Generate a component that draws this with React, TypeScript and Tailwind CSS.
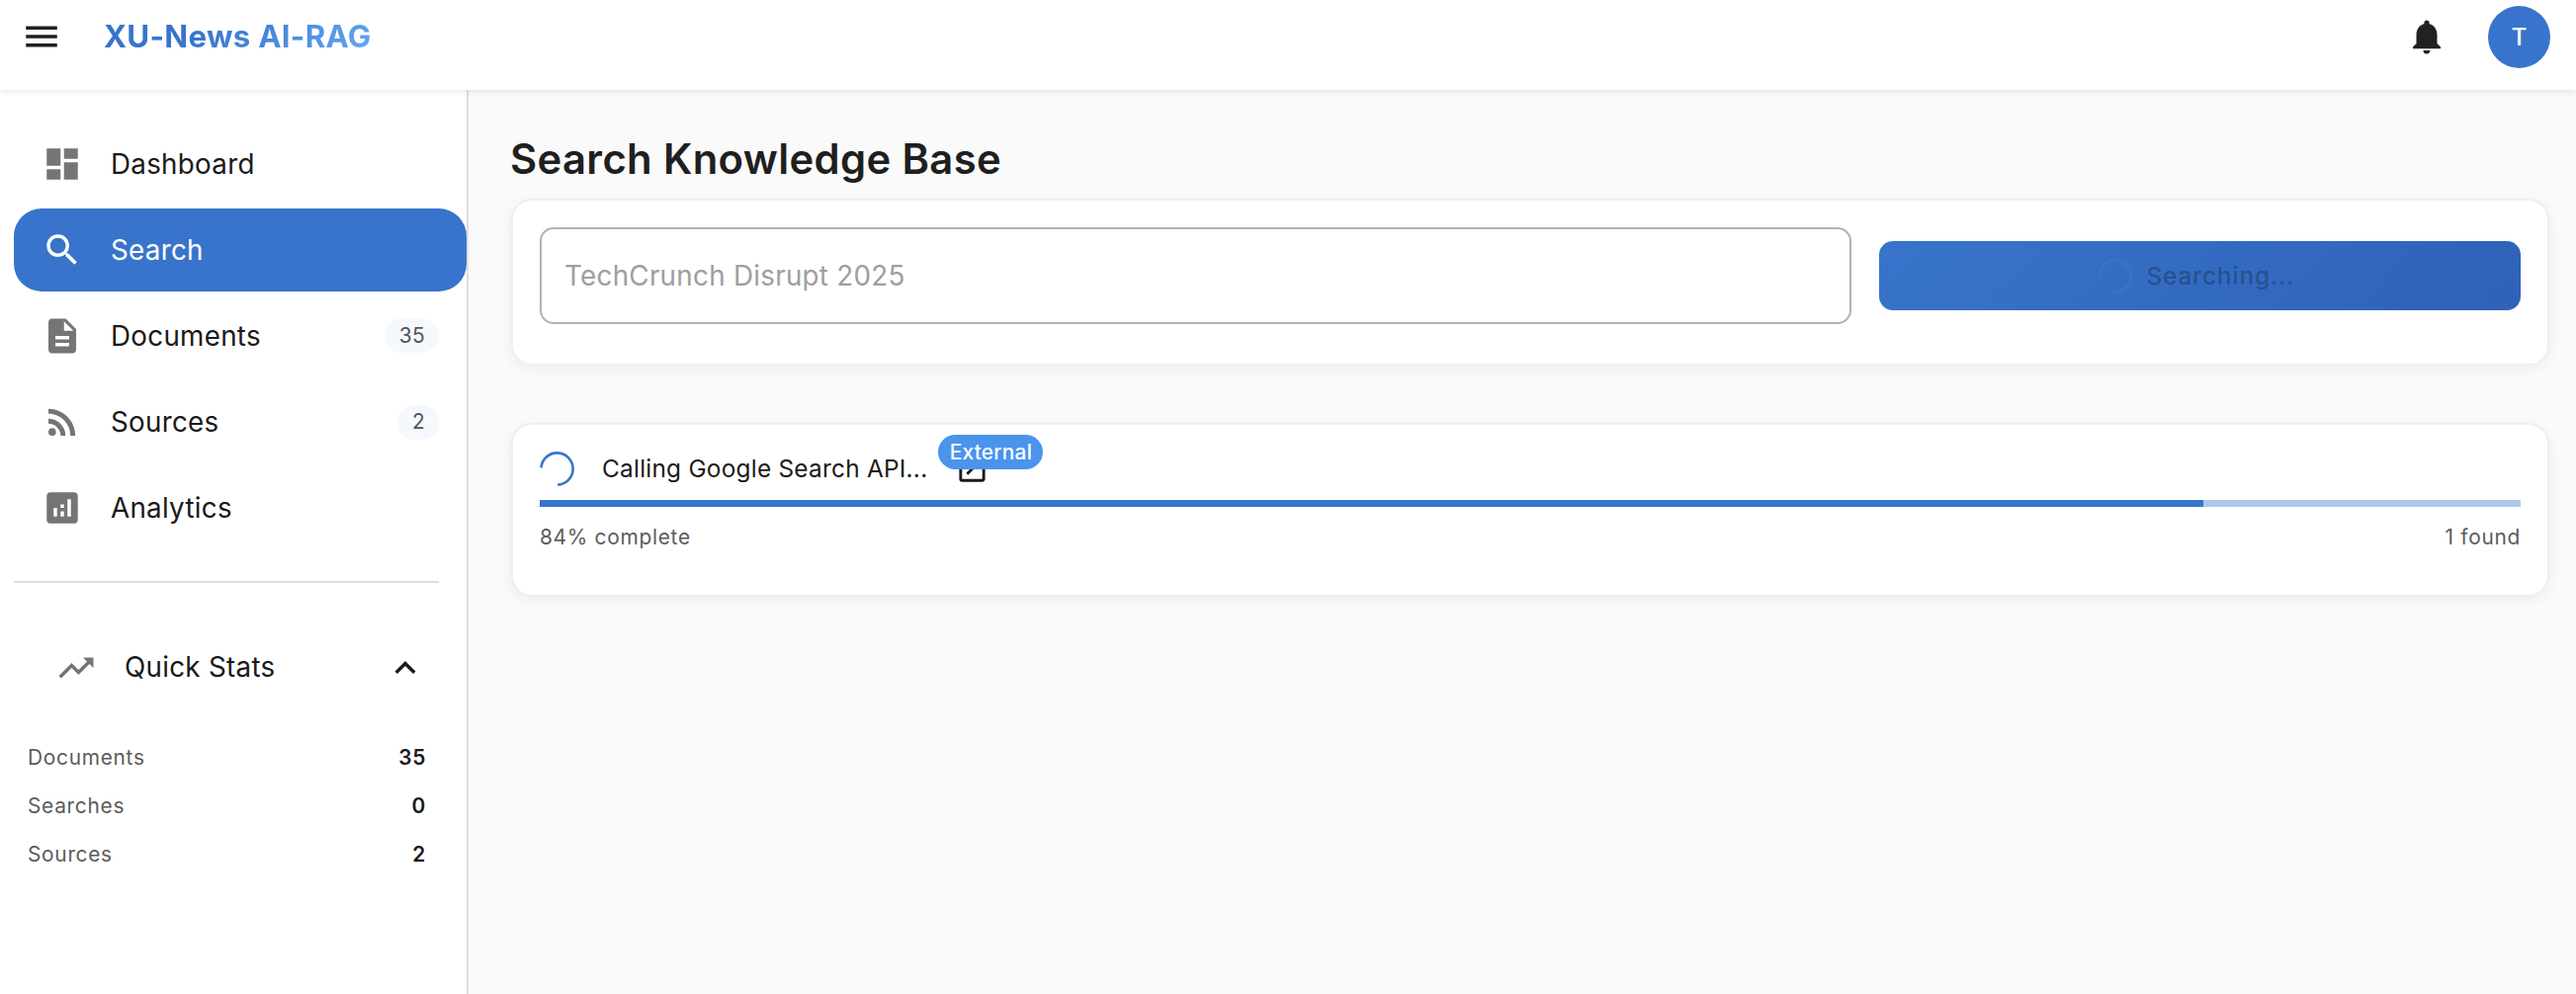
import React from "react";
import {
  MdAnalytics,
  MdDashboard,
  MdDescription,
  MdExpandLess,
  MdMenu,
  MdNotifications,
  MdOpenInNew,
  MdRssFeed,
  MdSearch,
  MdTrendingUp,
} from "react-icons/md";
import type { IconType } from "react-icons";

type NavItem = { label: string; icon: IconType; count?: number; active?: boolean };

const navItems: NavItem[] = [
  { label: "Dashboard", icon: MdDashboard },
  { label: "Search", icon: MdSearch, active: true },
  { label: "Documents", icon: MdDescription, count: 35 },
  { label: "Sources", icon: MdRssFeed, count: 2 },
  { label: "Analytics", icon: MdAnalytics },
];

const stats = [
  { label: "Documents", value: 35 },
  { label: "Searches", value: 0 },
  { label: "Sources", value: 2 },
];

const progress = 84;

function Spinner({ className }: { className: string }) {
  return (
    <svg viewBox="0 0 35 35" className={className} fill="none" stroke="currentColor" strokeWidth="2.6">
      <path d="M1.5 16.4A16.1 16.1 0 1 1 18.2 33.6" />
    </svg>
  );
}

function Header() {
  return (
    <header className="relative z-10 flex h-[91px] items-start bg-white shadow-[0_1px_6px_rgba(0,0,0,0.12)]">
      <div className="flex h-[74px] w-full items-center pr-[26px] pl-[21px]">
        <MdMenu className="size-[42px] text-[#1f1f1f]" />
        <h1 className="ml-[42px] bg-linear-135 from-[#3874cb] from-35% to-[#64a8f4] bg-clip-text text-[31.3px] font-bold tracking-[0.24px] text-transparent">
          XU-News AI-RAG
        </h1>
        <MdNotifications className="ml-auto size-[42px] text-[#212121]" />
        <div className="ml-[41px] flex size-[63px] items-center justify-center rounded-full bg-[#3874cb] text-[24.4px] font-medium text-white">
          T
        </div>
      </div>
    </header>
  );
}

function Sidebar() {
  return (
    <aside className="flex w-[474px] shrink-0 flex-col border-r-2 border-[#dedede] bg-white pt-[33px] text-[#1a1a1a]">
      <nav className="flex flex-col gap-[3.5px] pl-[14px]">
        {navItems.map(({ label, icon: Icon, count, active }) => (
          <div
            key={label}
            className={
              active
                ? "flex h-[83.6px] items-center rounded-[28px] bg-[#3874cb] pr-[28px] pl-[28px] text-white"
                : "flex h-[83.6px] items-center pr-[28px] pl-[28px]"
            }
          >
            <Icon className={active ? "size-[42px] text-white" : "size-[42px] text-[#757575]"} />
            <span className="ml-[28px] pt-[2px] text-[27.8px] tracking-[0.26px]">{label}</span>
            {count !== undefined && (
              <span className="ml-auto flex h-[35px] items-center rounded-full bg-[#f5f9fd] pr-[14px] pl-[15px] text-[20.9px] tracking-[0.3px] text-[#555]">
                {count}
              </span>
            )}
          </div>
        ))}
      </nav>
      <hr className="mt-[32px] mr-[28px] ml-[14px] border-t-2 border-[#dedede]" />
      <div className="mt-[44px] flex h-[84px] items-center pr-[41px] pl-[56px]">
        <MdTrendingUp className="size-[42px] text-[#757575]" />
        <span className="ml-[28px] text-[27.8px] tracking-[0.26px]">Quick Stats</span>
        <MdExpandLess className="ml-auto size-[42px]" />
      </div>
      <dl className="mt-[24px] flex flex-col pr-[41px] pl-[28px] text-[20.9px] tracking-[0.7px]">
        {stats.map(({ label, value }) => (
          <div key={label} className="flex h-[49px] items-center justify-between">
            <dt className="text-[#5c5c5c]">{label}</dt>
            <dd className="font-semibold">{value}</dd>
          </div>
        ))}
      </dl>
    </aside>
  );
}

function SearchCard() {
  return (
    <section className="mt-[11px] flex h-[169px] items-start rounded-[21px] border-2 border-[#efefef] bg-white px-[27px] pt-[27px] shadow-[0_3px_14px_rgba(0,0,0,0.06)]">
      <div className="flex h-[98px] w-[1327px] items-center rounded-[14px] border-2 border-[#b2b2b2] px-[23px] pt-px text-[27.8px] tracking-[0.26px] text-[#9e9e9e]">
        TechCrunch Disrupt 2025
      </div>
      <div className="mt-[14px] ml-[28px] flex h-[70px] flex-1 items-center justify-center rounded-[14px] bg-linear-135 from-[#3874cb] to-[#2f61b8] pr-[7px] text-[24.4px] font-medium text-[#27518f]">
        <Spinner className="mr-[14px] size-[35px] text-[#3873cb]" />
        <span className="tracking-[0.85px]">Searching...</span>
      </div>
    </section>
  );
}

function ProgressCard() {
  return (
    <section className="mt-[58px] flex h-[176px] flex-col rounded-[21px] border-2 border-[#efefef] bg-white px-[27px] pt-[27px] shadow-[0_3px_14px_rgba(0,0,0,0.06)]">
      <div className="flex h-[35px] items-center">
        <Spinner className="size-[35px] text-[#3874cb]" />
        <span className="ml-[28px] text-[24.4px] tracking-[0.24px] text-[#1a1a1a]">Calling Google Search API...</span>
        <div className="relative ml-[28px] size-[35px]">
          <MdOpenInNew className="size-[35px] text-[#1a1a1a]" />
          <span className="absolute -top-[17px] -left-[17px] flex h-[35px] w-[106px] items-center justify-center rounded-full bg-[#4a94ec] text-[20.9px] font-medium tracking-[0.2px] text-white">
            External
          </span>
        </div>
      </div>
      <div className="mt-[14px] h-[7px] bg-[#aec8e9]">
        <div className="h-full bg-[#3874cb]" style={{ width: `${progress}%` }} />
      </div>
      <div className="mt-[13px] flex h-[35px] items-center justify-between text-[20.9px] tracking-[0.7px] text-[#5c5c5c]">
        <span>{progress}% complete</span>
        <span>1 found</span>
      </div>
    </section>
  );
}

export default function App() {
  return (
    <div className="flex h-[1006px] w-[2606px] flex-col overflow-hidden bg-[#fafafa] font-['Inter',sans-serif]">
      <Header />
      <div className="flex min-h-0 flex-1">
        <Sidebar />
        <main className="flex-1 pt-[42px] pr-[27px] pl-[43px]">
          <h2 className="-ml-px h-[57px] text-[41.8px] leading-[57px] font-semibold tracking-[0.35px] text-[#1f1f1f]">
            Search Knowledge Base
          </h2>
          <SearchCard />
          <ProgressCard />
        </main>
      </div>
    </div>
  );
}
